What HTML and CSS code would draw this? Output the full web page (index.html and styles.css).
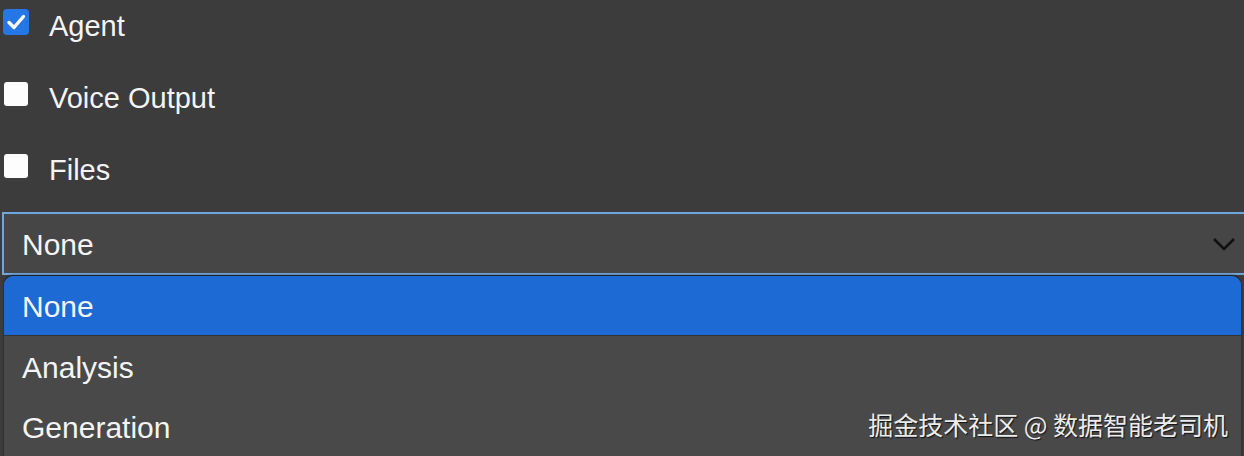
FILE: index.html
```html
<!DOCTYPE html>
<html lang="en">
<head>
    <meta charset="UTF-8">
    <meta name="viewport" content="width=device-width, initial-scale=1.0">
    <title>Options</title>
    <link rel="stylesheet" href="styles.css">
</head>
<body>
    <div class="panel">
        <div class="toggles">
            <label class="toggle">
                <input type="checkbox" checked>
                <span>Agent</span>
            </label>
            <label class="toggle">
                <input type="checkbox">
                <span>Voice Output</span>
            </label>
            <label class="toggle">
                <input type="checkbox">
                <span>Files</span>
            </label>
        </div>

        <div class="picker">
            <div class="picker-box">
                <span>None</span>
                <svg class="chevron" width="24" height="14" viewBox="0 0 24 14">
                    <path d="M2 2 L12 12 L22 2" fill="none" stroke="#111" stroke-width="2.6"/>
                </svg>
            </div>
            <ul class="picker-menu">
                <li class="selected">None</li>
                <li>Analysis</li>
                <li>Generation</li>
            </ul>
        </div>
    </div>

    <div class="mark">掘金技术社区 @ 数据智能老司机</div>
</body>
</html>
```

FILE: styles.css
```css
html, body{
    margin: 0;
    height: 100%;
    overflow: hidden;
}

body{
    background: #3c3c3c;
    font-family: 'Liberation Sans', Arial, sans-serif;
    font-size: 29px;
    color: #f4f4f4;
}

.toggles{
    margin-top: -10px;
}

.toggle{
    display: flex;
    align-items: center;
    height: 72px;
    padding-left: 4px;
    gap: 21px;
}

.toggle input{
    appearance: none;
    width: 24px;
    height: 24px;
    margin: 0 0 8px 0;
    background: #fdfdfd;
    border-radius: 3px;
}

.toggle input:checked{
    width: 26px;
    height: 26px;
    margin-left: -1px;
    margin-right: -1px;
    background: #2677e6;
    border-radius: 4px;
    background-image: url("data:image/svg+xml,%3Csvg xmlns='http://www.w3.org/2000/svg' viewBox='0 0 26 26'%3E%3Cpath d='M6 13.5 L11 18.5 L20.5 7.5' fill='none' stroke='white' stroke-width='3.4' stroke-linecap='round' stroke-linejoin='round'/%3E%3C/svg%3E");
}

.picker{
    margin-top: 6px;
    position: relative;
    font-size: 30px;
}

.picker-box{
    display: flex;
    align-items: center;
    justify-content: space-between;
    height: 59px;
    margin-left: 2px;
    margin-right: -4px;
    padding: 0 12px 0 18px;
    background: #464646;
    border: 2px solid #6fa6dd;
}

.picker-box span{
    margin-top: 2px;
}

.chevron{
    margin-right: -2px;
}

.picker-menu{
    list-style: none;
    margin: 0;
    padding: 0;
    position: absolute;
    top: 64px;
    left: 4px;
    right: 3px;
    height: 200px;
    background: #494949;
    border-radius: 9px 9px 0 0;
    overflow: hidden;
    box-shadow: 0 -1px 2px rgba(0, 0, 0, 0.6);
}

.picker-menu li{
    display: flex;
    align-items: center;
    height: 60px;
    padding: 3px 0 0 18px;
    box-sizing: border-box;
}

.picker-menu li.selected{
    background: #1e6ad5;
    border-bottom: 1px solid #333;
}

.mark{
    position: absolute;
    right: 16px;
    bottom: 14px;
    font-family: 'Noto Sans CJK SC', sans-serif;
    font-size: 25px;
    color: #ececec;
    text-shadow: 1px 1px 1px #111;
}
```
